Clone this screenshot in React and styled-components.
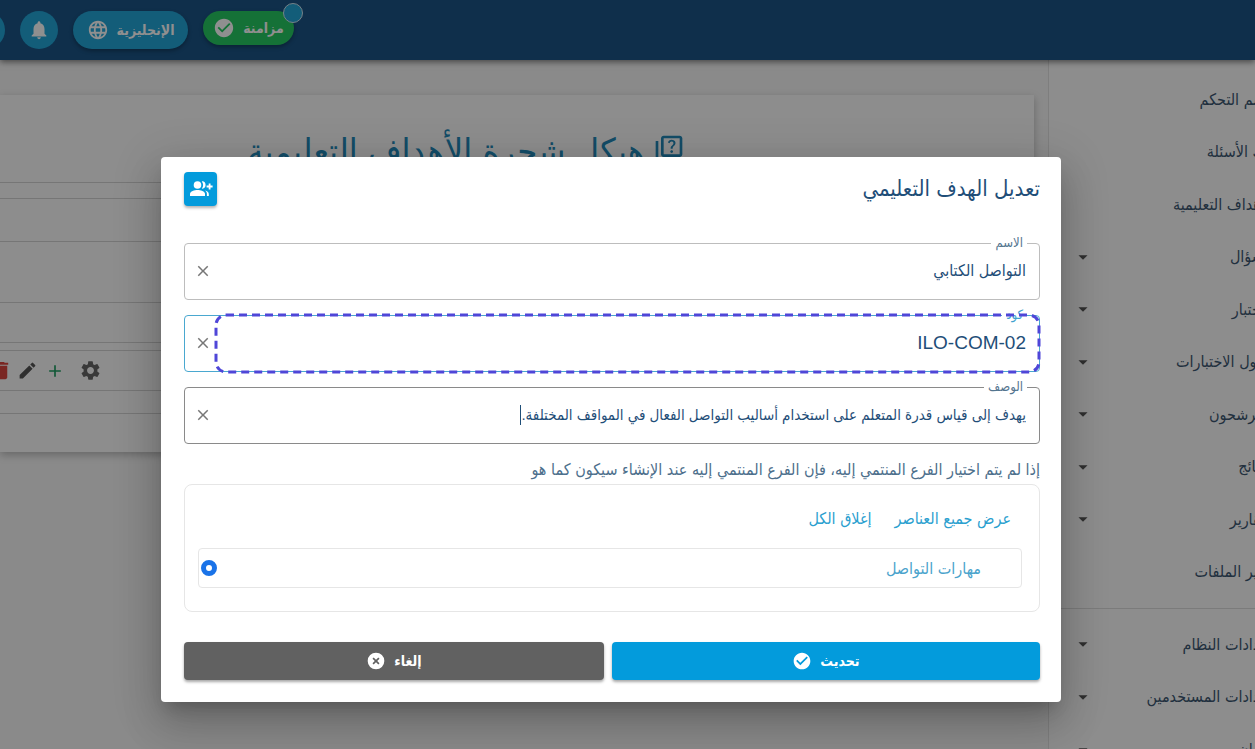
import styled, { createGlobalStyle } from 'styled-components';
import {
  MdAdd,
  MdArrowDropDown,
  MdCheckCircle,
  MdClose,
  MdDelete,
  MdEdit,
  MdLanguage,
  MdNotifications,
  MdOutlineQuiz,
  MdSettings,
} from 'react-icons/md';

const arabic = '"DejaVu Sans Condensed", "DejaVu Sans", sans-serif';

const GlobalStyle = createGlobalStyle`
  * {
    box-sizing: border-box;
  }
  body {
    margin: 0;
    font-family: ${arabic};
    font-size: 16px;
    color: #1f4e78;
  }
  button,
  input {
    font: inherit;
    color: inherit;
  }
  button {
    border: 0;
    padding: 0;
    background: none;
    cursor: pointer;
  }
`;

const Page = styled.div`
  position: relative;
  height: 100vh;
  overflow: hidden;
  display: flex;
  flex-direction: column;
  background: #f6f6f6;
`;

const TopBar = styled.header`
  flex: 0 0 60px;
  display: flex;
  justify-content: flex-end;
  align-items: flex-start;
  gap: 15px;
  padding-top: 11px;
  background: #1b5486;
  box-shadow: 0 2px 6px rgba(0, 0, 0, 0.5);
  z-index: 1;
`;

const RoundButton = styled.button`
  flex: 0 0 38px;
  height: 38px;
  border-radius: 50%;
  background: #22a6d8;
  color: #fff;
  display: flex;
  align-items: center;
  justify-content: center;
  margin-left: ${({ $cut }) => ($cut ? '-33px' : '0')};
`;

const Pill = styled.button`
  position: relative;
  width: ${({ $width }) => $width};
  height: ${({ $height }) => $height};
  border-radius: 20px;
  background: ${({ $color }) => $color};
  color: #fff;
  font-size: 14px;
  font-weight: 700;
  display: flex;
  align-items: center;
  justify-content: center;
  gap: 8px;
  box-shadow: 0 2px 4px rgba(0, 0, 0, 0.3);
`;

const Badge = styled.span`
  position: absolute;
  top: -8px;
  right: -9px;
  width: 20px;
  height: 20px;
  border: 1px solid #cfe6f2;
  border-radius: 50%;
  background: #22a6d8;
`;

const Columns = styled.div`
  flex: 1;
  min-height: 0;
  display: flex;
`;

const Sidebar = styled.nav`
  flex: 0 0 307px;
  margin-right: -100px;
  padding-top: 13px;
  border-left: 1px solid #e0e0e0;
  background: #fcfcfc;
`;

const MenuGroup = styled.ul`
  list-style: none;
  margin: 0;
  padding: 0 82px 0 23px;
  height: ${({ $height }) => $height};
  display: grid;
  grid-auto-rows: 1fr;
`;

const MenuItem = styled.li`
  display: flex;
  align-items: center;
  justify-content: space-between;
  color: #3b5670;

  svg {
    color: #555;
  }
`;

const MenuLink = styled.a`
  color: inherit;
  text-decoration: none;
  white-space: nowrap;
`;

const MenuDivider = styled.hr`
  margin: 10px 0 9px;
  border: 0;
  border-top: 1px solid #dcdcdc;
`;

const Content = styled.main`
  flex: 1;
  padding: 35px 14px 0 0;
`;

const Card = styled.section`
  height: 357px;
  background: #fcfcfc;
  box-shadow: 0 3px 8px rgba(0, 0, 0, 0.25);
`;

const PageTitle = styled.h1`
  margin: 0 0 15px;
  height: 88px;
  padding: 38px 102px 0 0;
  border-bottom: 1px solid #d2d2d2;
  display: flex;
  justify-content: center;
  align-items: flex-start;
  gap: 8px;
  color: #2288b8;
  font-size: 36px;
  line-height: 38px;
  font-weight: 400;
`;

const TreeRow = styled.div`
  height: ${({ $height }) => $height};
  margin-bottom: ${({ $gap }) => $gap || '0'};
  border-top: ${({ $top }) => ($top ? '1px solid #d2d2d2' : '0')};
  border-bottom: 1px solid #d2d2d2;
  display: flex;
  align-items: center;
  justify-content: flex-end;
`;

const RowAction = styled.button`
  display: flex;
  color: ${({ $color }) => $color};
  margin-left: ${({ $space }) => $space};
`;

const Backdrop = styled.div`
  position: absolute;
  inset: 0;
  z-index: 2;
  display: flex;
  justify-content: center;
  align-items: flex-start;
  padding: 157px 33px 0 0;
  background: rgba(0, 0, 0, 0.44);
`;

const Dialog = styled.form`
  width: 100%;
  max-width: 900px;
  padding: 15px 21px 22px 23px;
  border-radius: 4px;
  background: #fff;
  box-shadow: 0 11px 15px -7px rgba(0, 0, 0, 0.2), 0 24px 38px 3px rgba(0, 0, 0, 0.14),
    0 9px 46px 8px rgba(0, 0, 0, 0.12);
`;

const DialogHead = styled.div`
  display: flex;
  align-items: center;
  justify-content: space-between;
  margin-bottom: 37px;
`;

const DialogTitle = styled.h2`
  margin: 0;
  font-size: 22px;
  line-height: 24px;
  font-weight: 400;
`;

const AddButton = styled.button`
  width: 33px;
  height: 34px;
  border-radius: 4px;
  background: #039bdc;
  color: #fff;
  display: flex;
  align-items: center;
  justify-content: center;
  box-shadow: 0 2px 3px rgba(0, 0, 0, 0.3);
`;

const Fields = styled.div`
  display: grid;
  gap: 15px;
`;

const FieldBox = styled.div`
  position: relative;
  height: 57px;
  padding: 0 13px 2px;
  border: 1px solid ${({ $border }) => $border};
  border-radius: 4px;
  display: flex;
  align-items: center;
`;

const FieldLabel = styled.label`
  position: absolute;
  top: -9px;
  right: 12px;
  padding: 0 4px;
  background: #fff;
  color: ${({ $active }) => ($active ? '#3fa3cf' : '#54758f')};
  font-size: 13px;
  line-height: 16px;
`;

const FieldInput = styled.input`
  field-sizing: content;
  border: 0;
  padding: 0;
  outline: 0;
  background: none;
  font-family: "Liberation Sans", ${arabic};
  font-size: ${({ $size }) => $size};
  line-height: 24px;
`;

const Caret = styled.span`
  width: 1px;
  height: 20px;
  background: #1f4e78;
`;

const ClearButton = styled.button`
  display: flex;
  margin-right: auto;
  margin-left: -4px;
  color: #777;
`;

const Highlight = styled.svg`
  position: absolute;
  top: -1px;
  right: 0;
  width: calc(100% - 31px);
  height: 57px;
  overflow: visible;
  pointer-events: none;
`;

const Hint = styled.p`
  margin: 14px 0 2px;
  color: #4d6f8c;
  line-height: 24px;
`;

const Tree = styled.div`
  height: 128px;
  padding: 22px 17px 0 13px;
  border: 1px solid #e6e6e6;
  border-radius: 8px;
`;

const TreeLinks = styled.div`
  display: flex;
  gap: 23px;
  padding-right: 11px;
  margin-bottom: 17px;
`;

const TreeLink = styled.button`
  color: #2ba0cf;
  line-height: 24px;
`;

const TreeOption = styled.label`
  height: 40px;
  padding: 0 40px 0 2px;
  border: 1px solid #e6e6e6;
  border-radius: 4px;
  display: flex;
  align-items: center;
  justify-content: space-between;
  color: #4aa3cc;
`;

const Radio = styled.input`
  appearance: none;
  width: 16px;
  height: 16px;
  margin: 0;
  border: 5px solid #1a73e8;
  border-radius: 50%;
  background: #fff;
`;

const Actions = styled.div`
  display: grid;
  grid-template-columns: 51fr 50fr;
  gap: 8px;
  margin-top: 30px;
`;

const ActionButton = styled.button`
  height: 38px;
  border-radius: 4px;
  background: ${({ $color }) => $color};
  color: #fff;
  font-size: 14px;
  font-weight: 700;
  display: flex;
  align-items: center;
  justify-content: center;
  gap: 8px;
  box-shadow: 0 2px 3px rgba(0, 0, 0, 0.35);
`;

const CancelIcon = () => (
  <svg width="20" height="20" viewBox="0 0 24 24" aria-hidden="true">
    <circle cx="12" cy="12" r="10" fill="#fff" />
    <path d="M8.500 8.500l7 7M15.500 8.500l-7 7" stroke="#616161" strokeWidth="2" />
  </svg>
);

const GroupAddIcon = () => (
  <svg width="24" height="24" viewBox="0 0 24 24" fill="currentColor" aria-hidden="true">
    <circle cx="8.500" cy="8" r="3.800" />
    <path d="M1 19v-2c0-2.800 4.500-4 7.500-4s7.500 1.200 7.500 4v2z" />
    <path d="M12.800 4.400a6 6 0 0 1 0 7.200c2.300.4 3.800-1.400 3.800-3.600s-1.500-4-3.800-3.600z" />
    <path d="M16 13.600c1.200.8 1.900 1.900 1.900 3.400v2h1.900v-2c0-1.900-1.700-2.900-3.800-3.400z" />
    <path d="M19.700 6.500h1.800v2.100h2.100v1.800h-2.100v2.100h-1.800v-2.100h-2.100V8.600h2.100z" />
  </svg>
);

const mainMenu = [
  { label: 'قسم التحكم' },
  { label: 'بنك الأسئلة' },
  { label: 'الأهداف التعليمية' },
  { label: 'السؤال', open: true },
  { label: 'الاختبار', open: true },
  { label: 'جدول الاختبارات', open: true },
  { label: 'المرشحون', open: true },
  { label: 'النتائج', open: true },
  { label: 'التقارير', open: true },
  { label: 'مدير الملفات' },
];

const settingsMenu = [
  { label: 'إعدادات النظام', open: true },
  { label: 'إعدادات المستخدمين', open: true },
  { label: 'الأمان', open: true },
];

const Menu = ({ items, height }) => (
  <MenuGroup $height={height}>
    {items.map(({ label, open }) => (
      <MenuItem key={label}>
        <MenuLink href="#">{label}</MenuLink>
        {open && <MdArrowDropDown size={22} />}
      </MenuItem>
    ))}
  </MenuGroup>
);

const Field = ({ id, label, value, size, border, active, caret, children }) => (
  <FieldBox $border={border}>
    <FieldLabel htmlFor={id} $active={active}>
      {label}
    </FieldLabel>
    <FieldInput id={id} defaultValue={value} $size={size} />
    {caret && <Caret />}
    <ClearButton type="button" aria-label="مسح">
      <MdClose size={18} />
    </ClearButton>
    {children}
  </FieldBox>
);

const App = () => (
  <Page dir="rtl" lang="ar">
    <GlobalStyle />
    <TopBar>
      <Pill $width="91px" $height="34px" $color="#27c963">
        مزامنة
        <MdCheckCircle size={22} />
        <Badge />
      </Pill>
      <Pill $width="115px" $height="38px" $color="#22a6d8">
        الإنجليزية
        <MdLanguage size={22} />
      </Pill>
      <RoundButton aria-label="الإشعارات">
        <MdNotifications size={22} />
      </RoundButton>
      <RoundButton aria-label="الحساب" $cut />
    </TopBar>

    <Columns>
      <Sidebar>
        <Menu items={mainMenu} height="525px" />
        <MenuDivider />
        <Menu items={settingsMenu} height="158px" />
      </Sidebar>
      <Content>
        <Card>
          <PageTitle>
            <MdOutlineQuiz size={32} />
            هيكل شجرة الأهداف التعليمية
          </PageTitle>
          <TreeRow $height="44px" $top />
          <TreeRow $height="61px" />
          <TreeRow $height="40px" $gap="7px" />
          <TreeRow $height="41px" $top>
            <RowAction $color="#666" $space="14px" aria-label="إعدادات">
              <MdSettings size={23} />
            </RowAction>
            <RowAction $color="#1f9d62" $space="7px" aria-label="إضافة">
              <MdAdd size={20} />
            </RowAction>
            <RowAction $color="#555" $space="4px" aria-label="تعديل">
              <MdEdit size={21} />
            </RowAction>
            <RowAction $color="#d9453d" $space="-10px" aria-label="حذف">
              <MdDelete size={23} />
            </RowAction>
          </TreeRow>
          <TreeRow $height="23px" />
        </Card>
      </Content>
    </Columns>

    <Backdrop>
      <Dialog role="dialog" aria-labelledby="dialog-title">
        <DialogHead>
          <DialogTitle id="dialog-title">تعديل الهدف التعليمي</DialogTitle>
          <AddButton type="button" aria-label="إضافة">
            <GroupAddIcon />
          </AddButton>
        </DialogHead>

        <Fields>
          <Field id="name" label="الاسم" value="التواصل الكتابي" size="16px" border="#bdbdbd" />
          <Field id="code" label="كود" value="ILO-COM-02" size="19px" border="#4aa8d0" active>
            <Highlight>
              <rect
                width="100%"
                height="57"
                rx="10"
                fill="none"
                stroke="#4f46d8"
                strokeWidth="3"
                strokeDasharray="8 5"
              />
            </Highlight>
          </Field>
          <Field
            id="description"
            label="الوصف"
            value="يهدف إلى قياس قدرة المتعلم على استخدام أساليب التواصل الفعال في المواقف المختلفة."
            size="15px"
            border="#8a8a8a"
            caret
          />
        </Fields>

        <Hint>إذا لم يتم اختيار الفرع المنتمي إليه، فإن الفرع المنتمي إليه عند الإنشاء سيكون كما هو</Hint>

        <Tree>
          <TreeLinks>
            <TreeLink type="button">عرض جميع العناصر</TreeLink>
            <TreeLink type="button">إغلاق الكل</TreeLink>
          </TreeLinks>
          <TreeOption>
            مهارات التواصل
            <Radio type="radio" name="parent" defaultChecked />
          </TreeOption>
        </Tree>

        <Actions>
          <ActionButton type="submit" $color="#039bdc">
            تحديث
            <MdCheckCircle size={20} />
          </ActionButton>
          <ActionButton type="button" $color="#616161">
            إلغاء
            <CancelIcon />
          </ActionButton>
        </Actions>
      </Dialog>
    </Backdrop>
  </Page>
);

export default App;
